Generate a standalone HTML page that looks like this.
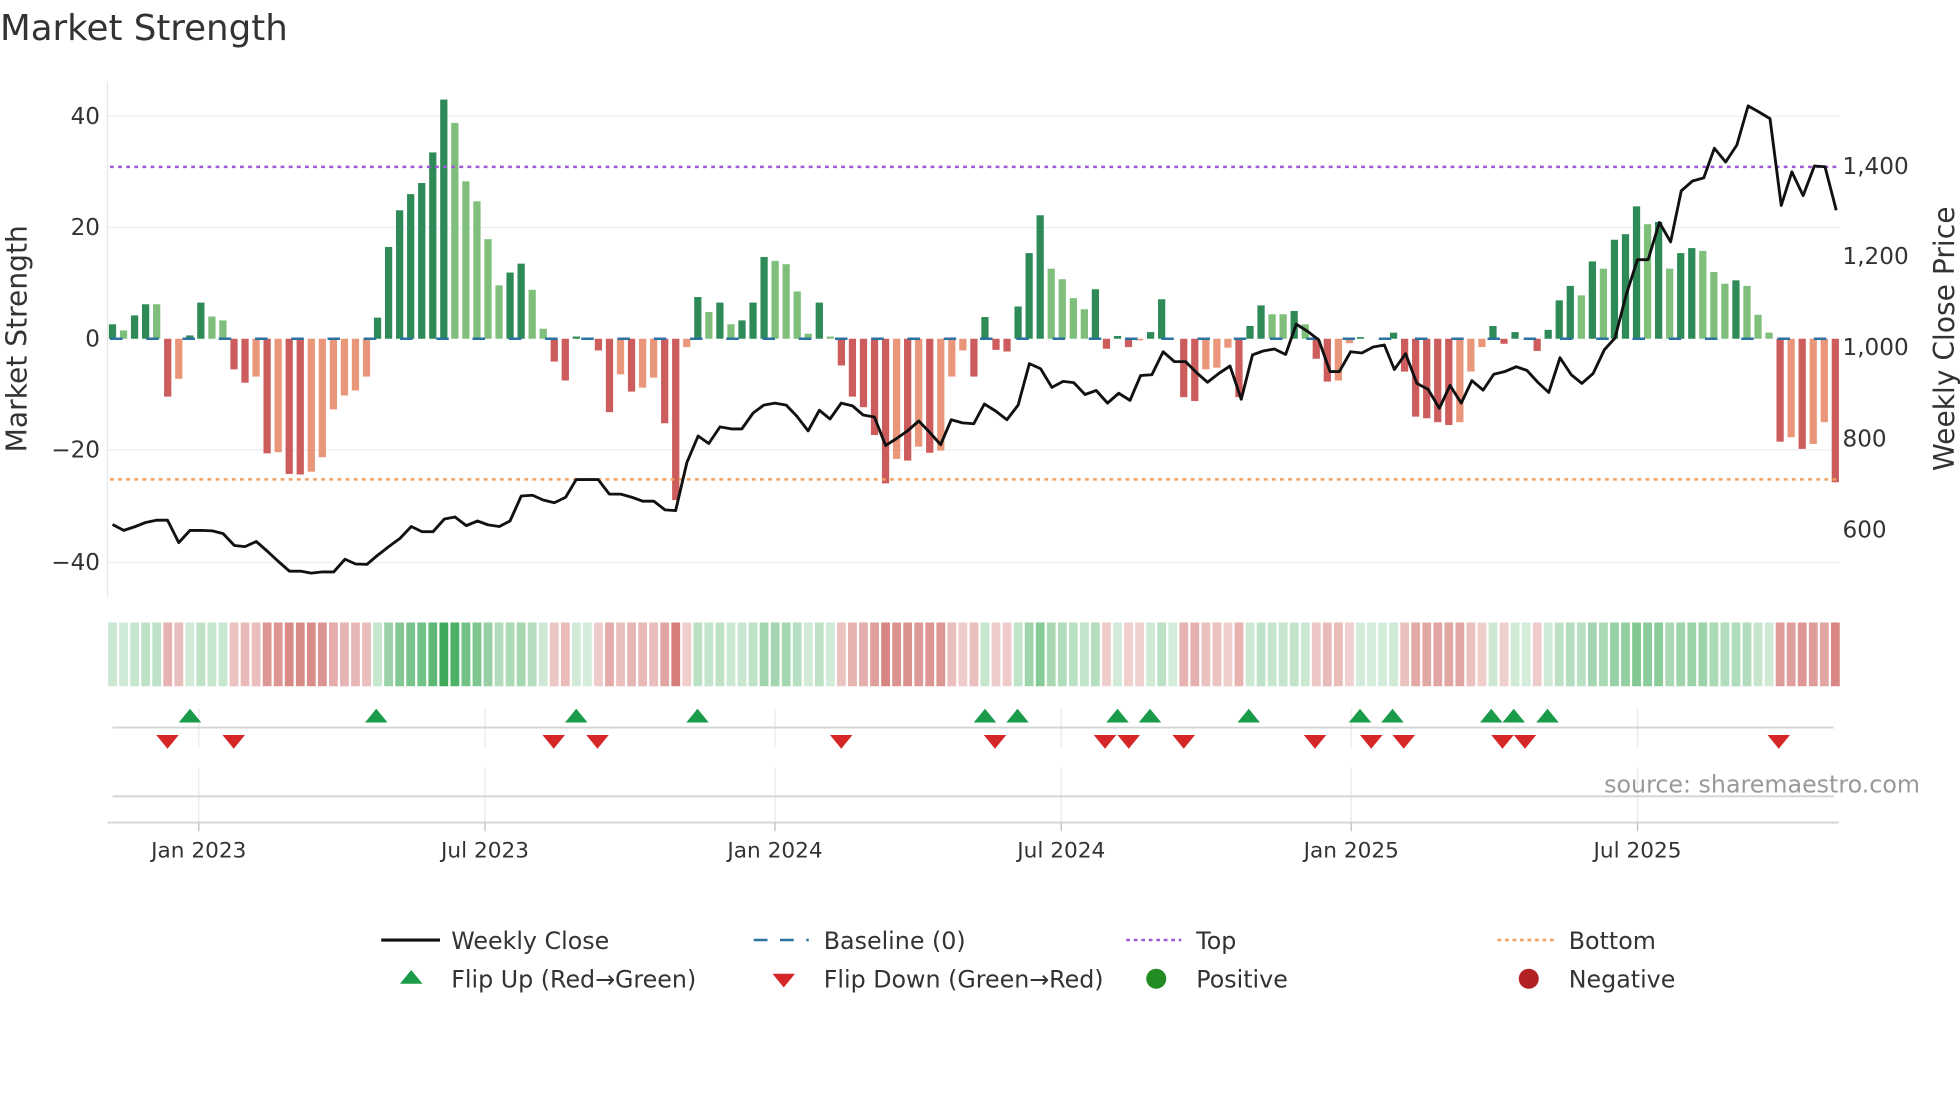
<!DOCTYPE html>
<html><head><meta charset="utf-8"><style>
html,body{margin:0;padding:0;background:#fff;}
svg{display:block;font-family:"DejaVu Sans","Liberation Sans",sans-serif;}
</style></head><body>
<svg id="s" width="1960" height="1102" viewBox="0 0 1568 881.6" xmlns="http://www.w3.org/2000/svg">
<text x="0" y="32" font-size="28.5" fill="#333">Market Strength</text>
<g stroke="#eceef3" stroke-width="1">
<line x1="86" x2="1471" y1="93" y2="93"/><line x1="86" x2="1471" y1="182" y2="182"/>
<line x1="86" x2="1471" y1="360" y2="360"/><line x1="86" x2="1471" y1="450" y2="450"/>
</g>
<line x1="86" x2="86" y1="65" y2="478" stroke="#e8e8e8"/>
<g font-size="18.5" fill="#333" text-anchor="end">
<text x="80" y="99">40</text><text x="80" y="188">20</text><text x="80" y="277">0</text>
<text x="80" y="366">−20</text><text x="80" y="456">−40</text>
</g>
<g font-size="18.5" fill="#333">
<text x="1474" y="139">1,400</text><text x="1474" y="211">1,200</text><text x="1474" y="284">1,000</text>
<text x="1474" y="357">800</text><text x="1474" y="430">600</text>
</g>
<text transform="translate(21,271) rotate(-90)" text-anchor="middle" font-size="22.5" fill="#333">Market Strength</text>
<text transform="translate(1563,271) rotate(-90)" text-anchor="middle" font-size="22.5" fill="#333">Weekly Close Price</text>
<g id="bars"></g>
<line x1="88" x2="1471" y1="271" y2="271" stroke="#2b72a0" stroke-width="2" stroke-dasharray="10,19"/>
<line x1="88" x2="1471" y1="133.5" y2="133.5" stroke="#9b59d6" stroke-width="2" stroke-dasharray="3,3.5"/>
<line x1="88" x2="1471" y1="383.5" y2="383.5" stroke="#f0a060" stroke-width="2" stroke-dasharray="3,3.5"/>
<g id="line"></g>
<g id="heat"></g>
<g stroke="#e6e8ec" stroke-width="1">
<line x1="159" x2="159" y1="567" y2="598"/><line x1="388" x2="388" y1="567" y2="598"/><line x1="620" x2="620" y1="567" y2="598"/><line x1="849" x2="849" y1="567" y2="598"/><line x1="1081" x2="1081" y1="567" y2="598"/><line x1="1310" x2="1310" y1="567" y2="598"/>
<line x1="159" x2="159" y1="614" y2="658"/><line x1="388" x2="388" y1="614" y2="658"/><line x1="620" x2="620" y1="614" y2="658"/><line x1="849" x2="849" y1="614" y2="658"/><line x1="1081" x2="1081" y1="614" y2="658"/><line x1="1310" x2="1310" y1="614" y2="658"/>
</g>
<line x1="90" x2="1467" y1="582" y2="582" stroke="#d4d4d4" stroke-width="1.5"/>
<line x1="90" x2="1467" y1="637" y2="637" stroke="#d4d4d4" stroke-width="1.5"/>
<line x1="86" x2="1471" y1="658" y2="658" stroke="#d4d4d4" stroke-width="1.5"/>
<g stroke="#bbb"><line x1="159" x2="159" y1="658" y2="665"/><line x1="388" x2="388" y1="658" y2="665"/><line x1="620" x2="620" y1="658" y2="665"/><line x1="849" x2="849" y1="658" y2="665"/><line x1="1081" x2="1081" y1="658" y2="665"/><line x1="1310" x2="1310" y1="658" y2="665"/></g>
<g id="flips"></g>
<g font-size="17.3" fill="#333" text-anchor="middle">
<text x="159" y="686">Jan 2023</text><text x="388" y="686">Jul 2023</text><text x="620" y="686">Jan 2024</text>
<text x="849" y="686">Jul 2024</text><text x="1081" y="686">Jan 2025</text><text x="1310" y="686">Jul 2025</text>
</g>
<text x="1536" y="634" text-anchor="end" font-size="19" fill="#999">source: sharemaestro.com</text>
<g font-size="19" fill="#333">
<line x1="305" x2="352" y1="752" y2="752" stroke="#111" stroke-width="2.5"/><text x="361" y="759">Weekly Close</text>
<line x1="603" x2="647" y1="752" y2="752" stroke="#2b72a0" stroke-width="2" stroke-dasharray="11,10"/><text x="659" y="759">Baseline (0)</text>
<line x1="901" x2="945" y1="752" y2="752" stroke="#9b59d6" stroke-width="2" stroke-dasharray="3,3"/><text x="957" y="759">Top</text>
<line x1="1198" x2="1243" y1="752" y2="752" stroke="#f0a060" stroke-width="2" stroke-dasharray="3,3"/><text x="1255" y="759">Bottom</text>
<polygon points="320,787 338,787 329,776" fill="#1a9b4a"/><text x="361" y="790">Flip Up (Red→Green)</text>
<polygon points="618,779 636,779 627,790" fill="#d62728"/><text x="659" y="790">Flip Down (Green→Red)</text>
<circle cx="925" cy="783" r="8" fill="#228b22"/><text x="957" y="790">Positive</text>
<circle cx="1223" cy="783" r="8" fill="#b22222"/><text x="1255" y="790">Negative</text>
</g>
</svg>
<script>
var NS="http://www.w3.org/2000/svg";
function el(p,t,a){var e=document.createElementNS(NS,t);for(var k in a)e.setAttribute(k,a[k]);p.appendChild(e);return e;}
var V=[[2.6,1],[1.5,0],[4.2,1],[6.2,1],[6.2,0],[-10.4,1],[-7.2,0],[0.6,1],[6.5,1],[4,0],[3.3,0],[-5.5,1],[-7.9,1],[-6.8,0],[-20.6,1],[-20.4,0],[-24.3,1],[-24.4,1],[-23.9,0],[-21.3,0],[-12.7,0],[-10.2,0],[-9.3,0],[-6.8,0],[3.8,1],[16.5,1],[23.1,1],[26,1],[28,1],[33.5,1],[43,1],[38.8,0],[28.3,0],[24.7,0],[17.9,0],[9.6,0],[11.9,1],[13.5,1],[8.8,0],[1.8,0],[-4.1,1],[-7.5,1],[0.4,1],[0.1,0],[-2.1,1],[-13.2,1],[-6.4,0],[-9.5,1],[-8.8,0],[-7,0],[-15.2,1],[-29,1],[-1.5,0],[7.5,1],[4.8,0],[6.5,1],[2.6,0],[3.3,1],[6.5,1],[14.7,1],[14,0],[13.4,0],[8.5,0],[0.9,0],[6.5,1],[0.4,0],[-4.8,1],[-10.4,1],[-12.3,1],[-17.3,1],[-26,1],[-21.6,0],[-21.9,1],[-19.4,0],[-20.5,1],[-20.1,0],[-6.8,0],[-2.1,0],[-6.8,1],
[3.9,1],[-2,1],[-2.3,1],[5.8,1],[15.4,1],[22.2,1],[12.6,0],[10.7,0],[7.3,0],[5.3,0],[8.9,1],[-1.8,1],[0.5,1],[-1.5,1],[-0.3,0],[1.2,1],[7.1,1],[0,0],[-10.5,1],[-11.2,1],[-5.5,0],[-5.2,0],[-1.6,0],[-10.5,1],[2.3,1],[6,1],[4.4,0],[4.4,0],[5,1],[2.6,0],[-3.6,1],[-7.7,1],[-7.5,0],[-0.8,0],[0.3,1],[0,0],[0,0],[1.1,1],[-5.9,1],[-14,1],[-14.3,1],[-15,1],[-15.5,1],[-15,0],[-5.9,0],[-1.5,0],[2.3,1],[-0.9,1],[1.2,1],[0,0],[-2.2,1],[1.6,1],[6.9,1],[9.5,1],[7.8,0],[13.9,1],[12.6,0],[17.8,1],[18.8,1],[23.8,1],[20.6,0],[21,1],[12.6,0],[15.4,1],[16.3,1],[15.8,0],[12,0],[9.9,0],[10.5,1],[9.5,0],[4.3,0],[1.1,0],[-18.5,1],[-17.7,0],[-19.8,1],[-18.9,0],[-15,0],[-25.8,1]];
var bars=document.getElementById("bars"),heat=document.getElementById("heat");
var N=V.length,x0=90,dx=8.835;
for(var i=0;i<N;i++){
 var v=V[i][0],d=V[i][1],cx=x0+i*dx;
 var y=271-v*4.45;
 var col=v>=0?(d?"#2e8b57":"#7fbf7b"):(d?"#cd5c5c":"#e9967a");
 if(Math.abs(v)>0.05) el(bars,"rect",{x:cx-2.9,y:Math.min(y,271),width:5.8,height:Math.abs(v)*4.45,fill:col});
 var a=0.2+0.7*Math.abs(v)/43;
 var hc=v>=0?"rgba(40,160,70,"+a+")":"rgba(195,75,70,"+(a+0.05)+")";
 el(heat,"rect",{x:cx-4.4+0.9,y:498,width:dx-1.8,height:51,fill:hc});
}
var L1=[[180,1327],[198,1342],[215,1333],[233,1322],[251,1316],[268,1316],[286,1373],[304,1342],[322,1342],[340,1343],[357,1350],[375,1380],[392,1383],[410,1370],[428,1395],[445,1420],[463,1445],[481,1445],[498,1450],[516,1447],[534,1447],[552,1415],[569,1427],[587,1428],[604,1405],[622,1383],[640,1362],[658,1332],[675,1345],[693,1345],[711,1313],[728,1308],[746,1330],[764,1318],[781,1328],[799,1332],[816,1318],[834,1255],[852,1253],[869,1265],[887,1272],[905,1258],[922,1213],[940,1213],[957,1213],[975,1250],[993,1250],[1011,1258],[1028,1268],[1046,1268],[1064,1290],[1081,1292],[1099,1170],[1117,1103],[1134,1122],[1152,1080],[1170,1085],[1187,1085],[1205,1045],[1222,1025],[1240,1020],[1258,1025],[1275,1053],[1293,1090],[1311,1038],[1328,1060],[1346,1020],[1364,1027],[1381,1050],[1399,1055],[1417,1127],[1434,1110],[1452,1090],[1470,1065],[1487,1093],[1505,1125],[1522,1062],[1540,1070],[1558,1072]];
var L2=[[7,1022],[25,1040],[43,1062],[61,1025],[79,920],[97,933],[115,980],[133,965],[150,968],[168,998],[186,988],[204,1020],[222,995],[240,1013],[257,950],[275,948],[293,890],[311,915],[329,915],[346,942],[364,967],[382,945],[400,926],[418,1010],[436,898],[453,888],[471,883],[489,897],[506,820],[524,838],[542,860],[560,940],[575,940],[593,890],[611,893],[629,878],[647,873],[663,935],[681,895],[699,970],[717,985],[735,1033],[752,975],[770,1020],[787,963],[805,987],[822,947],[840,940],[858,928],[875,937],[893,968],[910,993],[928,905],[946,948],[963,970],[981,945],[999,885],[1016,855],[1034,745],[1052,657],[1069,657],[1087,563],[1105,612],[1122,483],[1140,458],[1158,450],[1175,375],[1193,410],[1211,367],[1229,268],[1246,283],[1264,300],[1282,520],[1299,435],[1317,495],[1335,420],[1352,422],[1370,532]];
var pts=[];var sy=0.3162;
L1.forEach(function(p){pts.push((p[0]/2).toFixed(1)+","+(p[1]*sy).toFixed(1));});
L2.forEach(function(p){pts.push((784+p[0]/2).toFixed(1)+","+(p[1]*sy).toFixed(1));});
el(document.getElementById("line"),"polyline",{points:pts.join(" "),fill:"none",stroke:"#111","stroke-width":2.3,"stroke-linejoin":"round"});
var fl=document.getElementById("flips");
[152,301,461,558,788,814,894,920,999,1088,1114,1193,1211,1238].forEach(function(x){el(fl,"polygon",{points:(x-9)+",578 "+(x+9)+",578 "+x+",567",fill:"#1a9b4a"});});
[134,187,443,478,673,796,884,903,947,1052,1097,1123,1202,1220,1423].forEach(function(x){el(fl,"polygon",{points:(x-9)+",588 "+(x+9)+",588 "+x+",599",fill:"#d62728"});});
</script>
</body></html>
